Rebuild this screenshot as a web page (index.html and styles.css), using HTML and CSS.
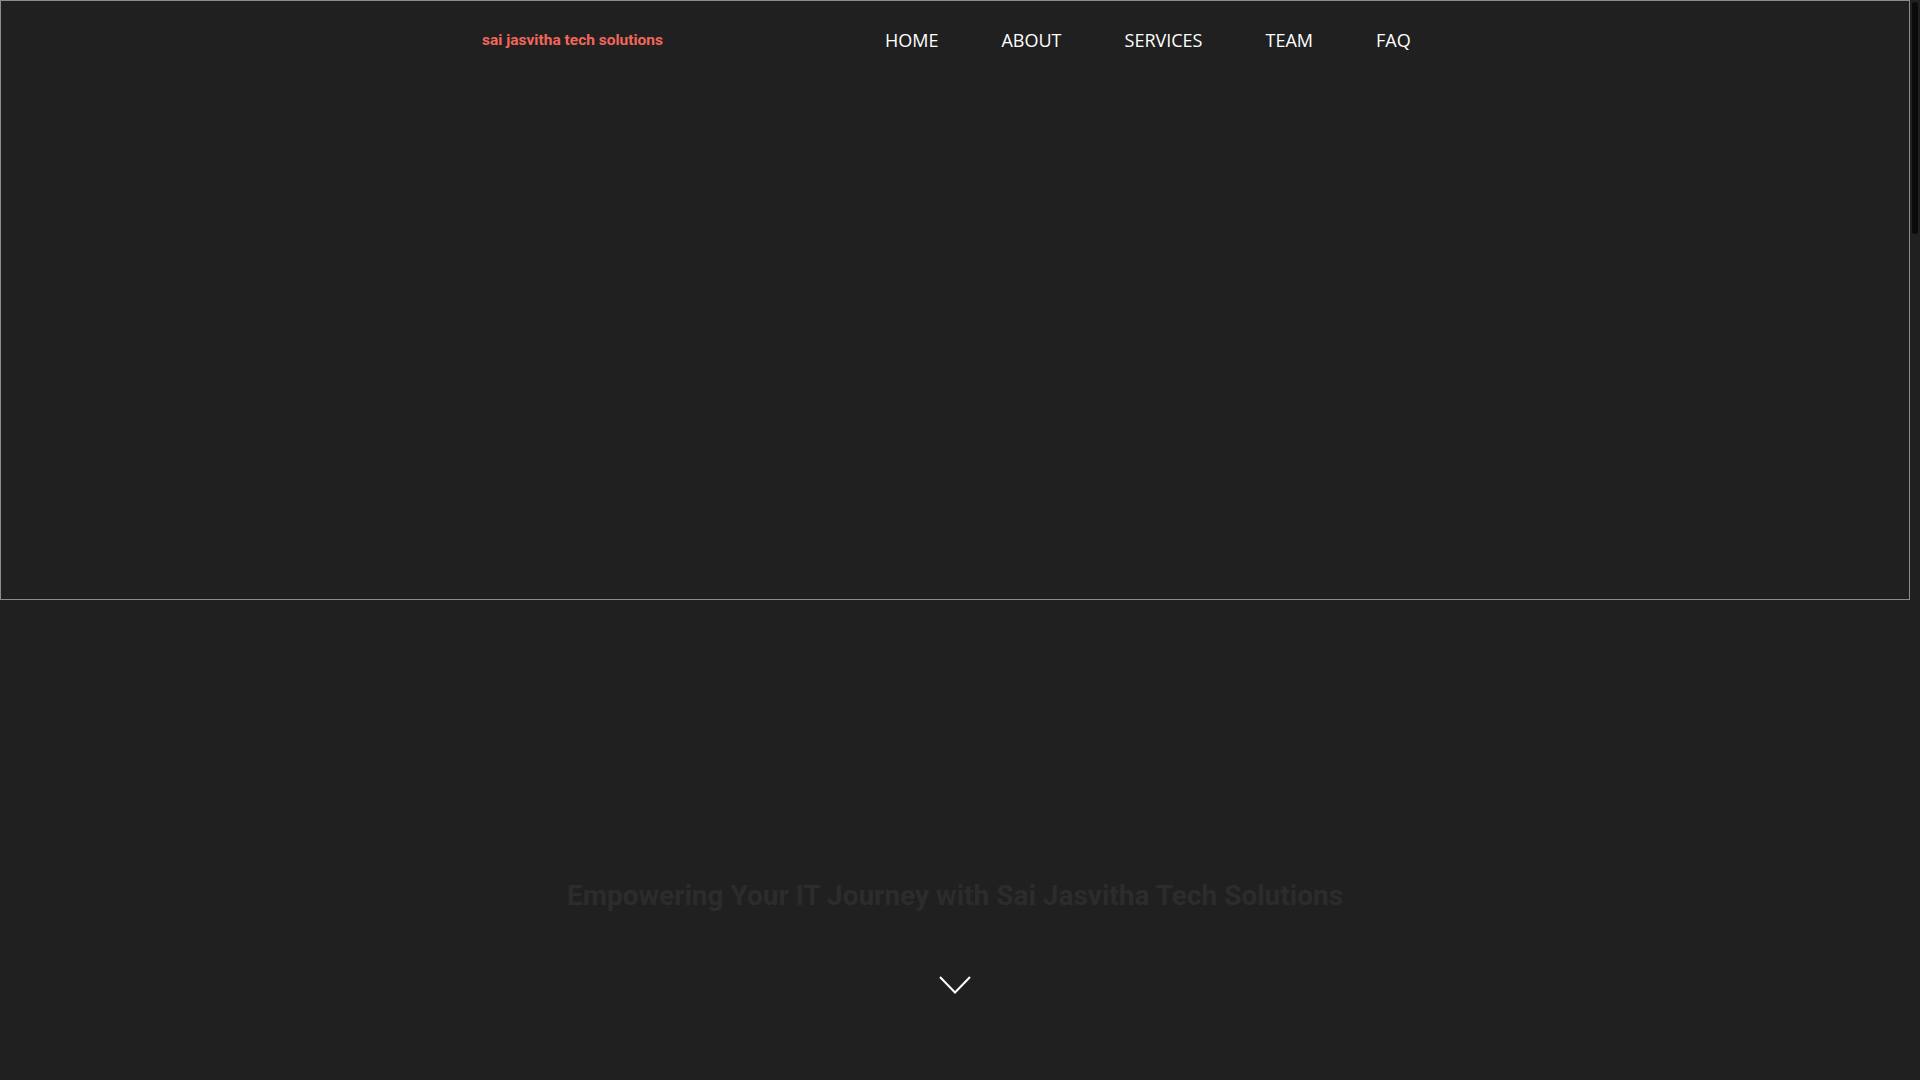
FILE: index.html
```html
<!DOCTYPE html>
<html lang="en">
<head>
<meta charset="utf-8">
<title>Sai Jasvitha Tech Solutions</title>
<link rel="stylesheet" href="styles.css">
</head>
<body>
<main class="page">
  <section class="hero">
    <header class="bar">
      <a class="logo" href="#">sai jasvitha tech solutions</a>
      <nav class="nav">
        <a href="#">HOME</a>
        <a href="#">ABOUT</a>
        <a href="#">SERVICES</a>
        <a href="#">TEAM</a>
        <a href="#">FAQ</a>
      </nav>
    </header>
  </section>
  <section class="intro">
    <h1 class="headline">Empowering Your IT Journey with Sai Jasvitha Tech Solutions</h1>
    <a class="down" href="#" aria-label="Scroll down">
      <svg width="32" height="18" viewBox="0 0 32 18"><path d="M1 1 L16 16.5 L31 1" fill="none" stroke="#ffffff" stroke-width="2"/></svg>
    </a>
  </section>
</main>
<div class="scrollbar"><div class="thumb"></div></div>
</body>
</html>
```
FILE: styles.css
```css
html {
  background: #202020;
}
body {
  margin: 0;
  background: #202020;
  font-family: "Open Sans", Arial, sans-serif;
  overflow: hidden;
}
a { text-decoration: none; }
.page {
  width: calc(100% - 10px);
}
.hero {
  height: 600px;
  box-sizing: border-box;
  border: 1px solid #8c8c8c;
}
.bar {
  width: 980px;
  margin: 0 auto;
  padding: 0 0 0 17px;
  box-sizing: border-box;
  height: 80px;
  display: flex;
  align-items: flex-start;
}
.logo {
  font-family: Roboto, Arial, sans-serif;
  font-weight: 700;
  font-size: 15.5px;
  line-height: 18px;
  color: #f2665b;
  margin-top: 30px;
  white-space: nowrap;
}
.nav {
  display: flex;
  gap: 63px;
  margin-left: 222px;
  margin-top: 26px;
}
.nav a {
  font-family: "Open Sans", Arial, sans-serif;
  font-size: 18px;
  line-height: 26px;
  color: #ffffff;
  white-space: nowrap;
}
.intro {
  height: 480px;
  box-sizing: border-box;
  padding-top: 278px;
  display: flex;
  flex-direction: column;
  align-items: center;
}
.headline {
  margin: 0;
  font-family: Roboto, Arial, sans-serif;
  font-weight: 700;
  font-size: 28px;
  line-height: 36px;
  color: #2c2c2c;
  text-align: center;
}
.down {
  display: block;
  margin-top: 62px;
  width: 32px;
  height: 18px;
}
.down svg { display: block; }
.scrollbar {
  position: fixed;
  top: 0;
  right: 0;
  width: 10px;
  height: 100%;
  background: #202020;
}
.thumb {
  margin: 2px 0 0 2px;
  width: 6px;
  height: 232px;
  border-radius: 3px;
  background: #0a0a0a;
}
```
